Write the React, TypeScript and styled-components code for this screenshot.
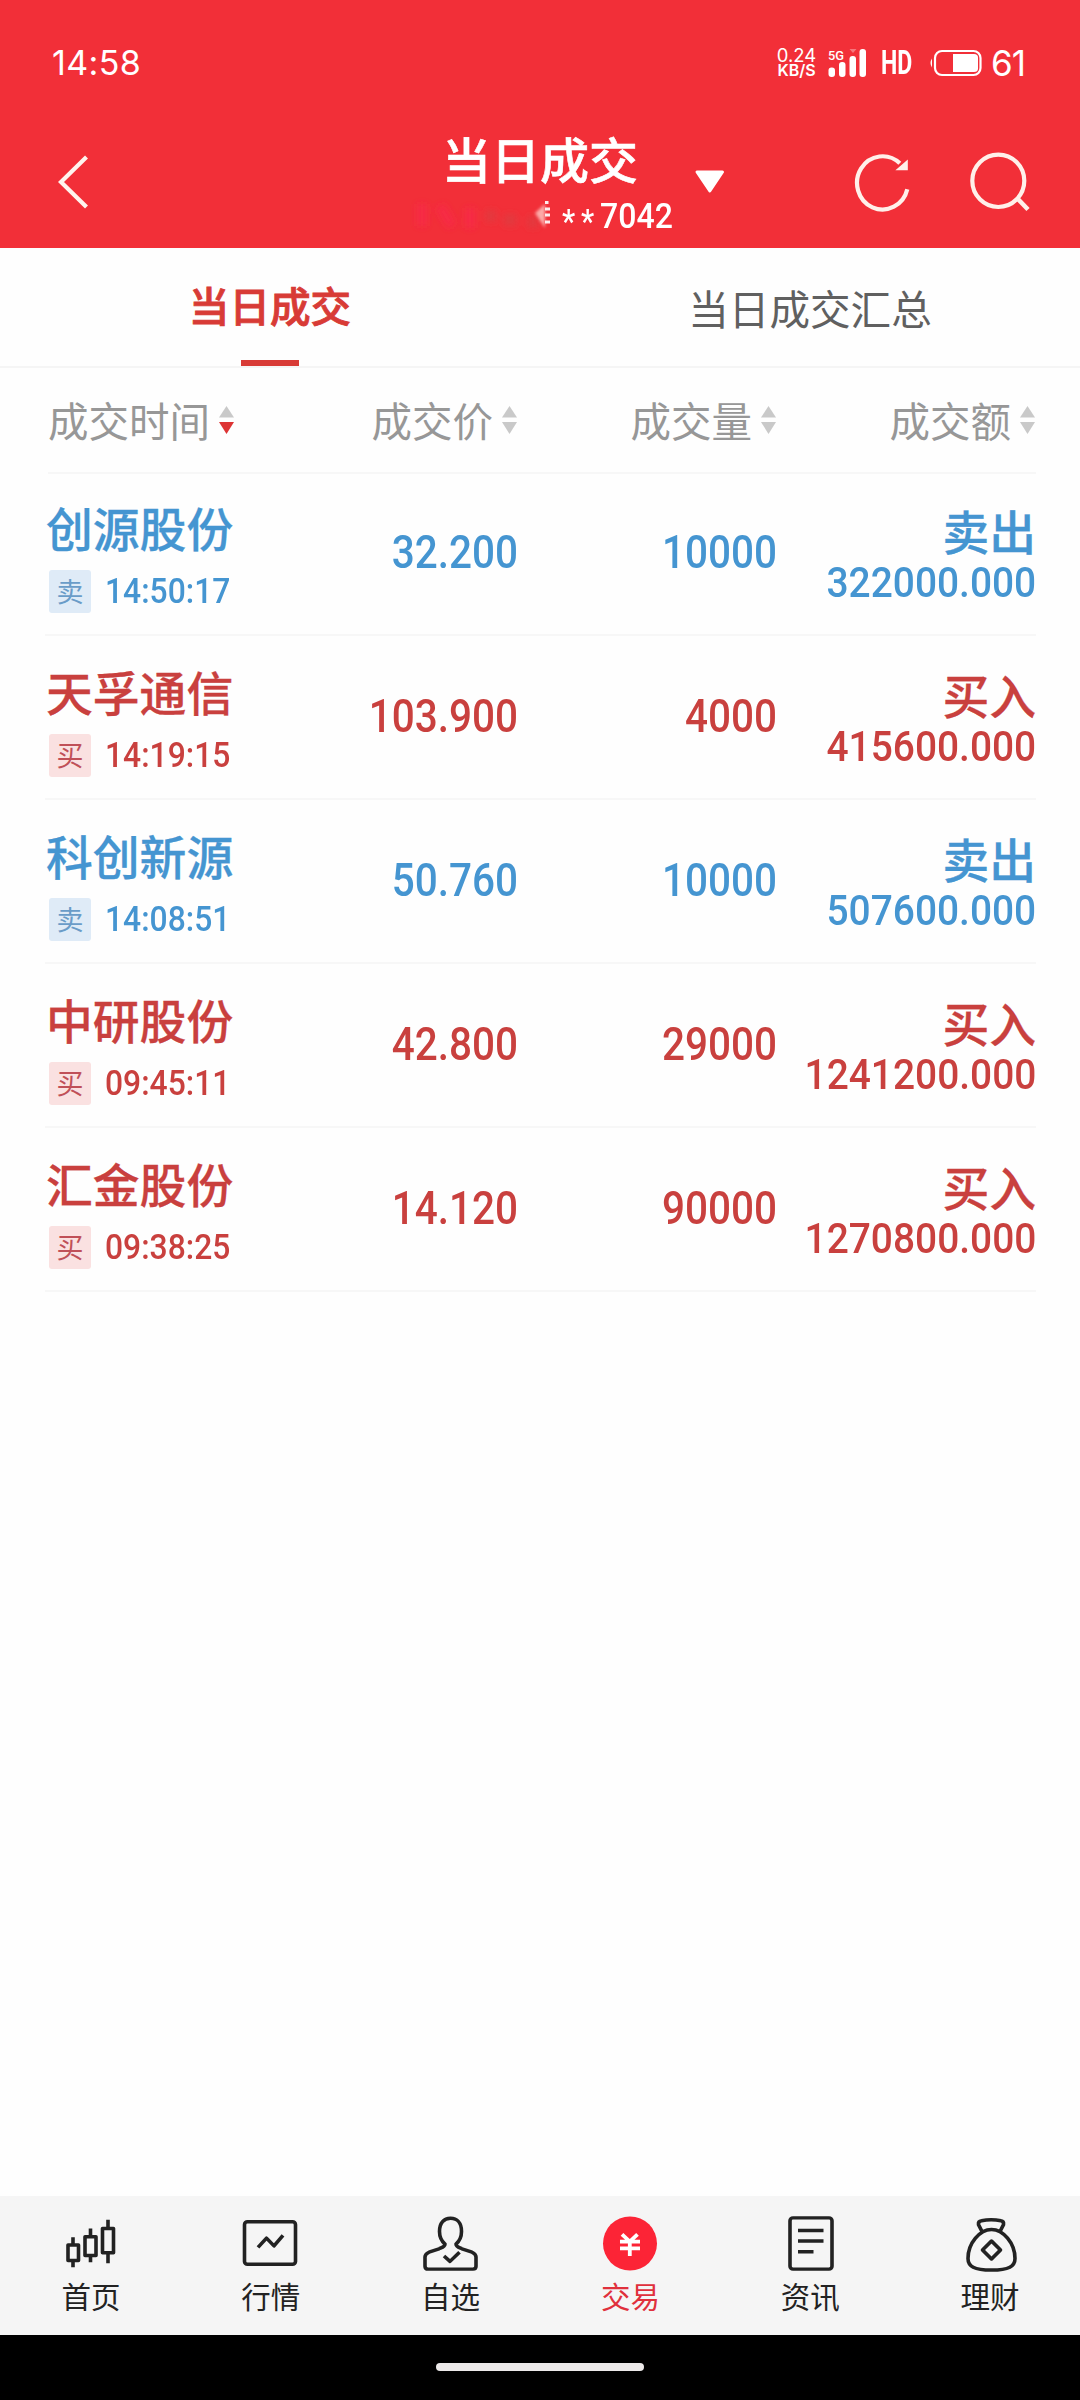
import React from "react";
import styled, { createGlobalStyle } from "styled-components";

const RED = "#f22f38";
const BUY = "#c9403e";
const SELL = "#4595d1";

const Global = createGlobalStyle`
  * { box-sizing: border-box; }
  body { margin: 0; background: #fefefe; font-family: Roboto, "Noto Sans CJK SC", sans-serif; }
`;

const Screen = styled.div`
  width: 1080px;
  height: 2400px;
  display: flex;
  flex-direction: column;
  background: #fefefe;
  overflow: hidden;
`;

const StatusBar = styled.div`
  height: 126px;
  flex: none;
  padding: 0 55px 0 52px;
  display: flex;
  justify-content: space-between;
  align-items: center;
  background: ${RED};
  color: #fff;
`;

const Clock = styled.span`
  font: 400 34px/40px Inter, sans-serif;
  letter-spacing: 0.4px;
`;

const StatusIcons = styled.div`
  display: flex;
  align-items: center;
  height: 40px;
`;

const NetSpeed = styled.div`
  width: 41px;
  display: flex;
  flex-direction: column;
  align-items: center;
  font: 400 18.5px/15px Inter, sans-serif;
  white-space: nowrap;
  b { font-weight: 600; font-size: 16px; }
`;

const SignalSvg = styled.svg`
  margin-left: 11px;
  overflow: visible;
`;

const HdText = styled.span`
  display: block;
  width: 34px;
  margin-left: 13px;
  font: 700 32.5px/40px Roboto, sans-serif;
  transform: scaleX(0.71);
  transform-origin: left center;
`;

const BatterySvg = styled.svg`
  margin-left: 14px;
`;

const BatteryText = styled.span`
  margin-left: 9px;
  font: 400 35px/40px Inter, sans-serif;
  letter-spacing: -1px;
`;

const Header = styled.header`
  height: 122px;
  flex: none;
  display: grid;
  grid-template-columns: 400px 280px 1fr;
  background: ${RED};
  color: #fff;
`;

const BackSide = styled.div`
  padding: 27px 0 0 56px;
`;

const TitleBlock = styled.div`
  display: flex;
  flex-direction: column;
  align-items: center;
`;

const Title = styled.h1`
  margin: 5px 0 0;
  font: 500 49px/54px "Noto Sans CJK SC", sans-serif;
  -webkit-text-stroke: 0.6px #fff;
`;

const Account = styled.div`
  align-self: stretch;
  display: flex;
  align-items: center;
  justify-content: flex-end;
  height: 48px;
  margin-top: 7px;
  padding-right: 8px;
`;

const Masked = styled.svg`
  flex: none;
`;

const AccountNo = styled.span`
  display: block;
  width: 110px;
  font: 500 35.6px/48px Roboto, "Noto Sans CJK SC", sans-serif;
  transform: scaleX(0.9);
  transform-origin: left center;
  white-space: nowrap;
`;

const Stars = styled.span`
  display: inline-block;
  font-size: 33px;
  letter-spacing: 6.5px;
  transform: translateY(4.5px);
`;

const Actions = styled.div`
  display: flex;
  align-items: flex-start;
  padding: 22px 0 0 14px;
`;

const ActionIcon = styled.svg<{ $gap: number; $top?: number }>`
  flex: none;
  margin-left: ${(p) => p.$gap}px;
  margin-top: ${(p) => p.$top ?? 0}px;
`;

const Tabs = styled.nav`
  height: 120px;
  flex: none;
  display: grid;
  grid-template-columns: 1fr 1fr;
  border-bottom: 2px solid #f5f5f5;
`;

const Tab = styled.div<{ $active?: boolean }>`
  display: flex;
  flex-direction: column;
  align-items: center;
  justify-content: space-between;
  padding-top: ${(p) => (p.$active ? 28 : 31)}px;
  font: ${(p) => (p.$active ? 500 : 400)} 40.6px/58px "Noto Sans CJK SC", sans-serif;
  -webkit-text-stroke: ${(p) => (p.$active ? 0.9 : 0)}px currentColor;
  color: ${(p) => (p.$active ? "#d83b36" : "#606060")};
`;

const Underline = styled.i`
  width: 58px;
  height: 6px;
  background: #d83b36;
`;

const Table = styled.main`
  flex: 1;
  margin: 0 44px 0 45px;
`;

const columns = "minmax(0, 1fr) 283px 259px 259px";

const HeadRow = styled.div`
  height: 104px;
  margin-left: 3px;
  padding-bottom: 1px;
  display: grid;
  grid-template-columns: ${columns};
  align-items: center;
  box-shadow: 0 2px 0 #f7f7f7;
`;

const HeadCell = styled.div<{ $first?: boolean }>`
  display: flex;
  align-items: center;
  justify-content: ${(p) => (p.$first ? "flex-start" : "flex-end")};
  gap: 8px;
  white-space: nowrap;
  font: 400 40.5px/58px "Noto Sans CJK SC", sans-serif;
  color: #979797;
  svg { flex: none; }
`;

const Row = styled.div<{ $side: "buy" | "sell" }>`
  height: 164px;
  display: grid;
  grid-template-columns: ${columns};
  border-bottom: 2px solid #f7f7f7;
  color: ${(p) => (p.$side === "buy" ? BUY : SELL)};
`;

const NameCell = styled.div`
  padding: 25px 0 0 1px;
`;

const StockName = styled.div`
  font: 500 46.8px/60px "Noto Sans CJK SC", sans-serif;
  -webkit-text-stroke: 0.3px currentColor;
  white-space: nowrap;
`;

const TimeLine = styled.div`
  display: flex;
  align-items: center;
  height: 44px;
  margin-top: 12px;
  padding-left: 3px;
`;

const SideTag = styled.span<{ $side: "buy" | "sell" }>`
  width: 42px;
  height: 43px;
  flex: none;
  border-radius: 3px;
  text-align: center;
  font: 400 27px/42px "Noto Sans CJK SC", sans-serif;
  color: ${(p) => (p.$side === "buy" ? "#c05058" : "#6a9cc8")};
  background: ${(p) => (p.$side === "buy" ? "#fae1e1" : "#dfebf7")};
`;

const Time = styled.span`
  display: block;
  margin-left: 14px;
  font: 500 35.6px/44px Roboto, sans-serif;
  transform: scaleX(0.895);
  transform-origin: left center;
  white-space: nowrap;
`;

const Num = styled.div<{ $small?: boolean }>`
  text-align: right;
  font: 500 ${(p) => (p.$small ? 42.5 : 45.5)}px/${(p) => (p.$small ? 46 : 56)}px Roboto, sans-serif;
  transform: scaleX(${(p) => (p.$small ? 0.915 : 0.89)});
  transform-origin: right center;
  white-space: nowrap;
`;

const NumCell = styled.div`
  padding-top: 53px;
`;

const AmountCell = styled.div`
  padding-top: 28px;
  display: flex;
  flex-direction: column;
  align-items: flex-end;
`;

const SideText = styled.div`
  font: 500 46.8px/60px "Noto Sans CJK SC", sans-serif;
  -webkit-text-stroke: 0.3px currentColor;
`;

const TabBar = styled.footer`
  height: 139px;
  flex: none;
  display: grid;
  grid-template-columns: repeat(6, 1fr);
  padding-left: 1px;
  background: #f5f5f5;
`;

const TabItem = styled.div<{ $active?: boolean }>`
  display: flex;
  flex-direction: column;
  align-items: center;
  padding-top: 18px;
  font: 400 29.5px/40px "Noto Sans CJK SC", sans-serif;
  color: ${(p) => (p.$active ? "#e0303c" : "#222")};
  svg { display: block; margin-bottom: 2px; }
`;

const GestureArea = styled.div`
  height: 65px;
  flex: none;
  display: flex;
  justify-content: center;
  padding-top: 28px;
  background: #000;
`;

const GestureBar = styled.i`
  width: 208px;
  height: 8px;
  border-radius: 4px;
  background: #edeaea;
`;

function SortArrows({ active }: { active?: boolean }) {
  return (
    <svg width="17" height="30" viewBox="0 0 17 30">
      <path d="M8.5 1 L16 12.5 H1 Z" fill="#c9c9c9" />
      <path d="M8.5 29 L16 17 H1 Z" fill={active ? "#dd3434" : "#c9c9c9"} />
    </svg>
  );
}

const line = { fill: "none", stroke: "#222", strokeWidth: 3.6, strokeLinejoin: "round", strokeLinecap: "butt" } as const;

const icons: Record<string, React.ReactNode> = {
  首页: (
    <g {...line}>
      <path d="M13 24v8M13 47v8M30.5 15v8M30.5 43v7M48 6v8M48 39v12" />
      <rect x="8" y="32" width="10.5" height="16" />
      <rect x="25" y="23.500" width="11" height="19.500" />
      <rect x="42.500" y="15" width="11" height="25" />
    </g>
  ),
  行情: (
    <g {...line}>
      <rect x="4.500" y="8" width="51" height="44" rx="3" />
      <path d="M18 34.500 L26.500 25 L34 33 L43 22" />
    </g>
  ),
  自选: (
    <g {...line}>
      <path d="M25 31 C20.500 27 19.500 23 19.500 18 C19.500 9 24 4.500 30.500 4.500 C37 4.500 41.500 9 41.500 18 C41.500 23 40.500 27 36 31 C36 34 38.500 34.500 42 36 L52 39.500 C55 41 56 42 56 44.500 V54 Q56 57 53 57 H8 Q5 57 5 54 V44.500 C5 42 6 41 9 39.500 L19 36 C22.500 34.500 25 34 25 31 Z" />
      <path d="M24 43.500 L30 49 L39.500 39.500" />
    </g>
  ),
  交易: (
    <g>
      <ellipse cx="30" cy="30.500" rx="27" ry="28" fill="#fc2436" />
      <path d="M22 21 L29.800 28.500 L37.500 21 M20 28.500H40 M20 35.500H40 M29.800 28V43.500" fill="none" stroke="#fff" strokeWidth="3.800" />
    </g>
  ),
  资讯: (
    <g {...line}>
      <rect x="10" y="4" width="42" height="53" rx="3" />
      <path d="M18 17H43.500M18 28H43.500M18 39H33.500" />
    </g>
  ),
  理财: (
    <g {...line}>
      <path d="M22 18 L18.500 11 Q18 7.500 21.500 7 Q31 5 41 7 Q44 7.500 43.500 11 L40 18" />
      <path d="M31.500 16 C43 16 55 30 55 46 C55 54 49 58 31.500 58 C14 58 8 54 8 46 C8 30 20 16 31.500 16 Z" />
      <path d="M31.500 28 L40.500 37.200 L31.500 46.500 L22.500 37.200 Z" />
    </g>
  ),
};

type Trade = { name: string; side: "buy" | "sell"; time: string; price: string; qty: string; amount: string };

const trades: Trade[] = [
  { name: "创源股份", side: "sell", time: "14:50:17", price: "32.200", qty: "10000", amount: "322000.000" },
  { name: "天孚通信", side: "buy", time: "14:19:15", price: "103.900", qty: "4000", amount: "415600.000" },
  { name: "科创新源", side: "sell", time: "14:08:51", price: "50.760", qty: "10000", amount: "507600.000" },
  { name: "中研股份", side: "buy", time: "09:45:11", price: "42.800", qty: "29000", amount: "1241200.000" },
  { name: "汇金股份", side: "buy", time: "09:38:25", price: "14.120", qty: "90000", amount: "1270800.000" },
];

export default function App() {
  return (
    <>
      <Global />
      <Screen>
        <StatusBar>
          <Clock>14:58</Clock>
          <StatusIcons>
            <NetSpeed>
              <span>0.24</span>
              <b>KB/S</b>
            </NetSpeed>
            <SignalSvg width="40" height="32" viewBox="0 0 40 32" fill="#fff">
              <text x="0" y="12.500" fontFamily="Roboto, sans-serif" fontSize="13.500" fontWeight="500" textLength="16" lengthAdjust="spacingAndGlyphs">5G</text>
              <rect x="0.500" y="20.500" width="6.500" height="9.500" rx="3" />
              <rect x="11" y="15" width="6.500" height="15" rx="3" />
              <rect x="21.500" y="9" width="6.500" height="21" rx="3" />
              <rect x="31.500" y="2" width="6.500" height="28" rx="3" />
              <path d="M21.500 2h7l-3.500 4z" opacity=".35" />
            </SignalSvg>
            <HdText>HD</HdText>
            <BatterySvg width="53" height="28" viewBox="0 0 53 28">
              <path d="M3 9.500 Q0 14 3 18.500 Z" fill="#fff" />
              <rect x="6" y="2" width="45.500" height="24" rx="7" fill="none" stroke="#fff" strokeWidth="2.200" />
              <path d="M24 5 H45 Q49 5 49 8.500 V19.500 Q49 23 45 23 H24 Z" fill="#fff" />
            </BatterySvg>
            <BatteryText>61</BatteryText>
          </StatusIcons>
        </StatusBar>

        <Header>
          <BackSide>
            <svg width="36" height="58" viewBox="0 0 36 58">
              <path d="M30.500 4 L5 29 L30.500 54" fill="none" stroke="#fff4ee" strokeWidth="4.200" />
            </svg>
          </BackSide>
          <TitleBlock>
            <Title>当日成交</Title>
            <Account>
              <Masked width="154" height="40" viewBox="0 0 154 40">
                <defs>
                  <filter id="smudge" x="-20%" y="-40%" width="140%" height="180%">
                    <feGaussianBlur stdDeviation="3.500" />
                  </filter>
                  <filter id="soft" x="-50%" y="-50%" width="200%" height="200%">
                    <feGaussianBlur stdDeviation="1.600" />
                  </filter>
                </defs>
                <g filter="url(#smudge)">
                  <path d="M14 8v22M32 10l12 20M62 12v20" stroke="#fb2450" strokeWidth="10" opacity=".6" />
                  <path d="M78 20h10M96 24h12M120 26h10" stroke="#cf4648" strokeWidth="11" opacity=".5" />
                </g>
                <path d="M127 17 L137 8 V32 Z" fill="#ffc9c4" opacity=".8" filter="url(#soft)" />
                <path d="M137 6.500h3.500M137 13h5M137 19h5M137 26h5" stroke="#fff" strokeWidth="2.800" opacity=".9" />
              </Masked>
              <AccountNo><Stars>**</Stars>7042</AccountNo>
            </Account>
          </TitleBlock>
          <Actions>
            <ActionIcon $gap={0} $top={20} width="32" height="28" viewBox="0 0 32 28">
              <path d="M3 4 H28.500 L15.800 23 Z" fill="#fff" stroke="#fff" strokeWidth="3" strokeLinejoin="round" />
            </ActionIcon>
            <ActionIcon $gap={126} $top={2} width="62" height="64" viewBox="0 0 62 64">
              <path d="M47.800 13.300 A25.500 26.600 0 1 0 55.300 39.300" fill="none" stroke="#fff0ea" strokeWidth="4.200" />
              <path d="M55.800 9.500 L43.400 20.300 H55.800 Z" fill="#fff0ea" />
            </ActionIcon>
            <ActionIcon $gap={53} width="64" height="66" viewBox="0 0 64 66">
              <ellipse cx="31.300" cy="32.800" rx="26" ry="26.200" fill="none" stroke="#fff0ea" strokeWidth="4.200" />
              <path d="M49.500 49.500 L61 61.500" stroke="#fff0ea" strokeWidth="4.500" />
            </ActionIcon>
          </Actions>
        </Header>

        <Tabs>
          <Tab $active>
            当日成交
            <Underline />
          </Tab>
          <Tab>当日成交汇总</Tab>
        </Tabs>

        <Table>
          <HeadRow>
            <HeadCell $first>成交时间<SortArrows active /></HeadCell>
            <HeadCell>成交价<SortArrows /></HeadCell>
            <HeadCell>成交量<SortArrows /></HeadCell>
            <HeadCell>成交额<SortArrows /></HeadCell>
          </HeadRow>
          {trades.map((t) => (
            <Row key={t.name} $side={t.side}>
              <NameCell>
                <StockName>{t.name}</StockName>
                <TimeLine>
                  <SideTag $side={t.side}>{t.side === "buy" ? "买" : "卖"}</SideTag>
                  <Time>{t.time}</Time>
                </TimeLine>
              </NameCell>
              <NumCell><Num>{t.price}</Num></NumCell>
              <NumCell><Num>{t.qty}</Num></NumCell>
              <AmountCell>
                <SideText>{t.side === "buy" ? "买入" : "卖出"}</SideText>
                <Num $small>{t.amount}</Num>
              </AmountCell>
            </Row>
          ))}
        </Table>

        <TabBar>
          {Object.keys(icons).map((label) => (
            <TabItem key={label} $active={label === "交易"}>
              <svg width="61" height="59" viewBox="0 0 61 61" preserveAspectRatio="none">{icons[label]}</svg>
              {label}
            </TabItem>
          ))}
        </TabBar>
        <GestureArea>
          <GestureBar />
        </GestureArea>
      </Screen>
    </>
  );
}
